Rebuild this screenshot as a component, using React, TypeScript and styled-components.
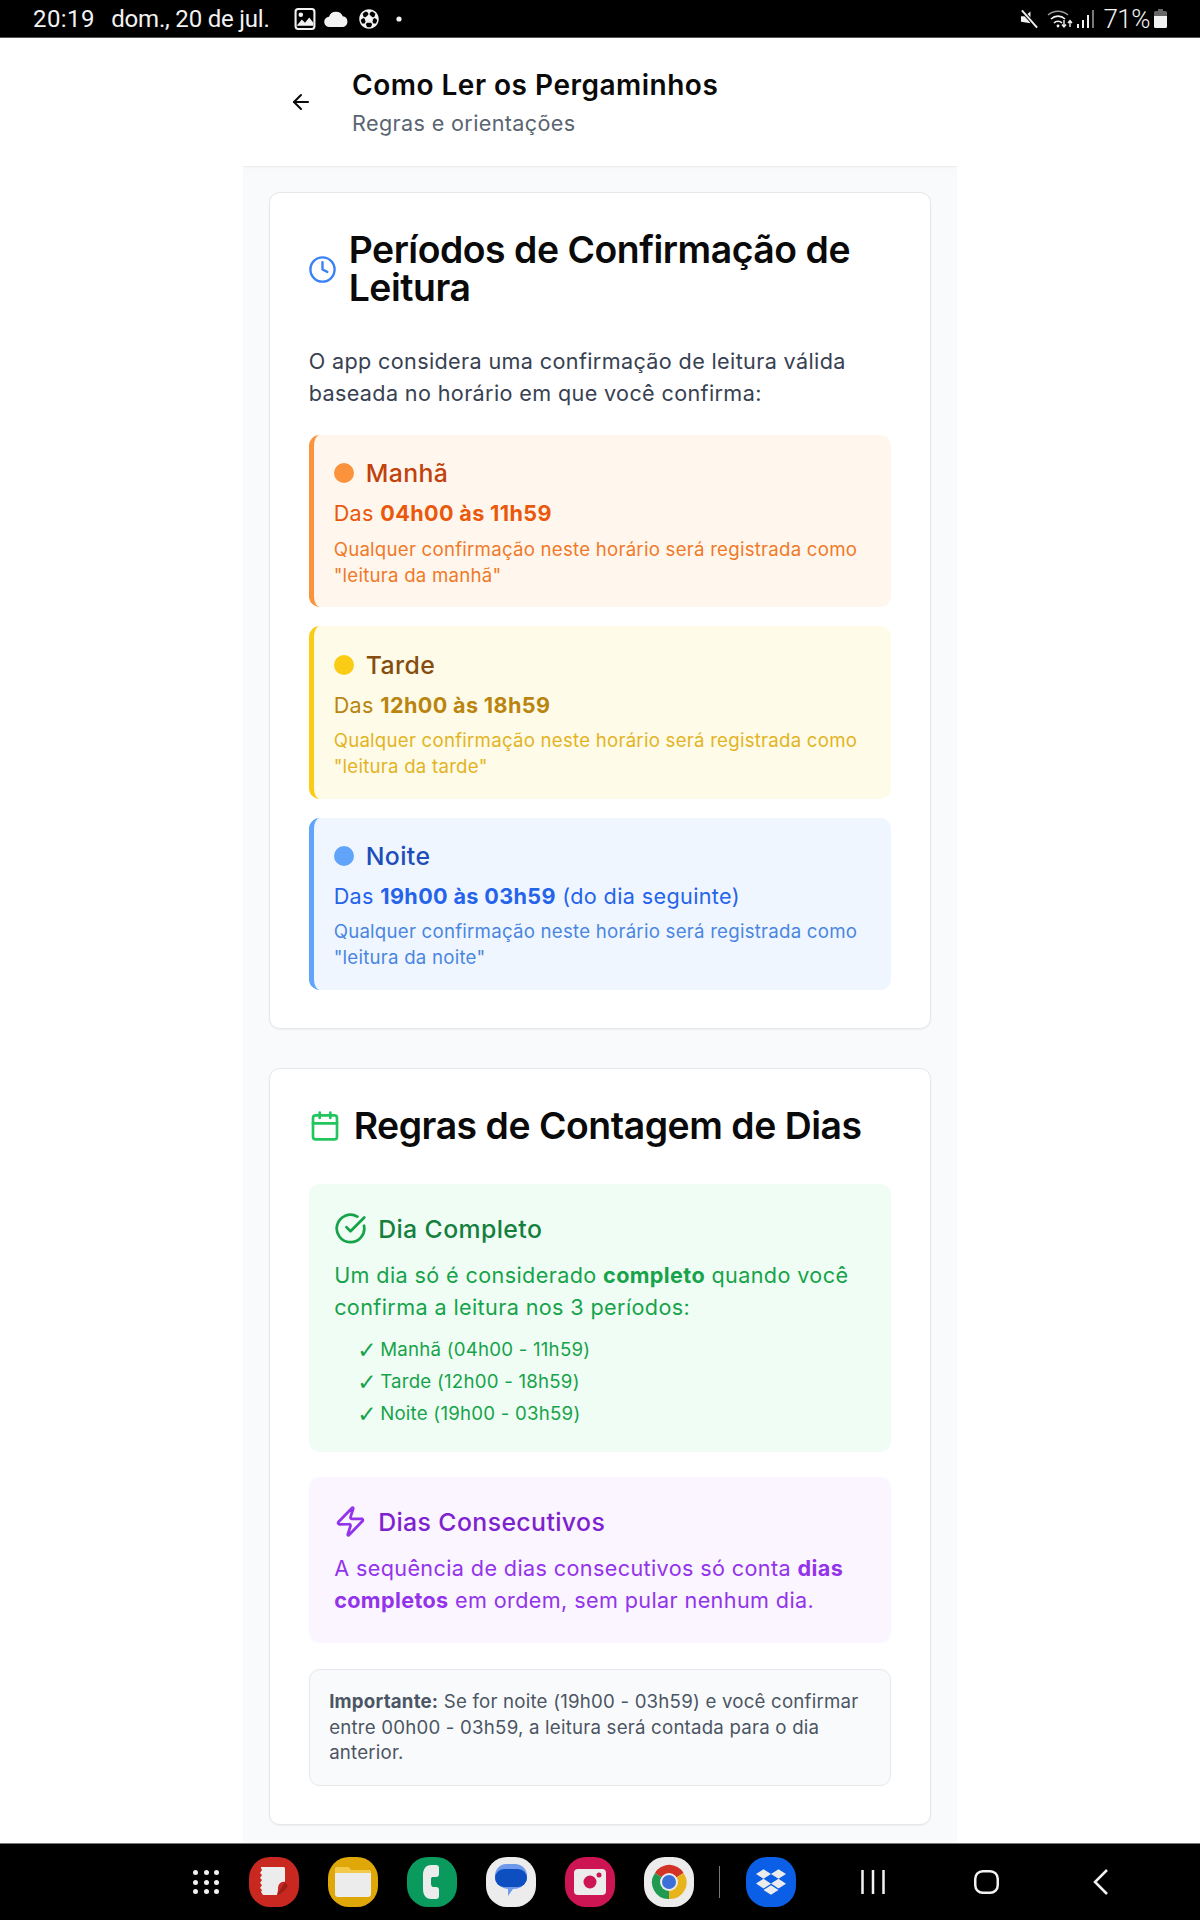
import React from "react";
import styled, { createGlobalStyle } from "styled-components";
import { ArrowLeft, Clock, Calendar, CircleCheckBig, Zap } from "lucide-react";
import { FaDropbox } from "react-icons/fa";
import { IoFootball } from "react-icons/io5";

const Global = createGlobalStyle`
  html, body { margin: 0; padding: 0; background: #fff; }
  * { box-sizing: border-box; }
  #root { font-family: Inter, "Liberation Sans", sans-serif; font-optical-sizing: none; }
`;

const Screen = styled.div`
  width: 1200px;
  height: 1920px;
  display: flex;
  flex-direction: column;
  overflow: hidden;
  background: #fff;
`;

const StatusBar = styled.div`
  flex: 0 0 38px;
  background: #000;
  border-bottom: 1px solid #555;
  color: #f2f2f2;
  display: flex;
  align-items: center;
  justify-content: space-between;
  padding: 0 33px;
  font-family: Roboto, sans-serif;
  font-size: 24px;
`;

const StatusGroup = styled.div`
  display: flex;
  align-items: center;
`;

const Time = styled.span`
  margin-right: 16.5px;
  letter-spacing: 0.4px;
`;

const DateText = styled.span`
  margin-right: 24px;
  letter-spacing: -0.2px;
`;

const Percent = styled.span`
  font-weight: 300;
  font-size: 26px;
  letter-spacing: -0.5px;
  margin: 0 4px 0 9px;
`;

const StatusIcon = styled.svg<{ $mr?: number; $ml?: number }>`
  display: block;
  margin-right: ${(p) => p.$mr ?? 0}px;
  margin-left: ${(p) => p.$ml ?? 0}px;
`;

const Column = styled.div`
  flex: 1;
  min-height: 0;
  width: 714px;
  margin-left: 243px;
  background: #f9fafb;
  display: flex;
  flex-direction: column;
  overflow: hidden;
`;

const Header = styled.header`
  flex: 0 0 129px;
  background: #fff;
  border-bottom: 1px solid #eceef1;
  box-shadow: 0 1px 2px rgba(0, 0, 0, 0.03);
  display: flex;
  align-items: center;
  padding: 0 0 0 46px;
  gap: 39px;
  color: #0a0a0a;
`;

const HeaderText = styled.div`
  display: flex;
  flex-direction: column;
  gap: 3px;
  padding-top: 1px;
`;

const PageTitle = styled.h1`
  margin: 0;
  font-size: 28px;
  line-height: 38px;
  font-weight: 600;
  letter-spacing: 0.5px;
`;

const PageSub = styled.div`
  font-size: 21.6px;
  line-height: 32px;
  letter-spacing: 0.36px;
  color: #5b6472;
`;

const Content = styled.main`
  padding: 25px 26px 0;
  display: flex;
  flex-direction: column;
  gap: 39px;
`;

const Card = styled.section`
  background: #fff;
  border: 1.33px solid #e5e7eb;
  border-radius: 10.67px;
  box-shadow: 0 1px 2px rgba(0, 0, 0, 0.05);
  padding: 38px 38.67px 37.67px;
`;

const CardHead = styled.div<{ $gap: number; $mb: number }>`
  display: flex;
  align-items: center;
  gap: ${(p) => p.$gap}px;
  margin-bottom: ${(p) => p.$mb}px;
  svg { flex-shrink: 0; }
`;

const ClockIcon = styled(Clock)`
  margin-left: -1px;
`;

const CardTitle = styled.h2`
  margin: 0;
  font-size: 37.33px;
  line-height: 38px;
  font-weight: 600;
  letter-spacing: -0.45px;
  color: #0a0a0a;
`;

const Intro = styled.p`
  margin: 0 0 26px;
  font-size: 21.6px;
  line-height: 32px;
  letter-spacing: 0.36px;
  color: #374151;
`;

const PeriodList = styled.div`
  display: flex;
  flex-direction: column;
  gap: 19px;
`;

const Period = styled.div<{ $bg: string; $edge: string }>`
  background: ${(p) => p.$bg};
  border-left: 5.33px solid ${(p) => p.$edge};
  border-radius: 10.67px;
  padding: 22.3px 21.33px 19.1px 20px;
`;

const PeriodHead = styled.div`
  display: flex;
  align-items: center;
  gap: 12px;
  margin-bottom: 8px;
`;

const Dot = styled.span<{ $c: string }>`
  width: 20px;
  height: 20px;
  border-radius: 50%;
  background: ${(p) => p.$c};
`;

const PeriodName = styled.div<{ $c: string }>`
  font-size: 24.8px;
  line-height: 32px;
  font-weight: 500;
  letter-spacing: 0.4px;
  color: ${(p) => p.$c};
`;

const PeriodTime = styled.div<{ $c: string }>`
  font-size: 21.6px;
  line-height: 32px;
  letter-spacing: 0.36px;
  color: ${(p) => p.$c};
  margin-bottom: 7.53px;
  b { font-weight: 700; }
`;

const PeriodNote = styled.div<{ $c: string }>`
  font-size: 18.67px;
  line-height: 25.7px;
  letter-spacing: 0.23px;
  color: ${(p) => p.$c};
`;

const RuleList = styled.div`
  display: flex;
  flex-direction: column;
  gap: 25.7px;
`;

const Rule = styled.div<{ $bg: string; $pb: number }>`
  background: ${(p) => p.$bg};
  border-radius: 10.67px;
  padding: 28px 26.67px ${(p) => p.$pb}px 25.5px;
`;

const RuleHead = styled.div<{ $c: string }>`
  display: flex;
  align-items: center;
  gap: 11px;
  margin-bottom: 14px;
  color: ${(p) => p.$c};
  font-size: 24.8px;
  line-height: 32px;
  font-weight: 500;
  letter-spacing: 0.4px;
`;

const RuleText = styled.p<{ $c: string }>`
  margin: 0;
  font-size: 21.6px;
  line-height: 32px;
  letter-spacing: 0.38px;
  color: ${(p) => p.$c};
  b { font-weight: 700; }
`;

const Checks = styled.ul`
  list-style: none;
  margin: 10.5px 0 0;
  padding: 0 0 0 23px;
`;

const CheckItem = styled.li`
  font-size: 18.67px;
  line-height: 32px;
  letter-spacing: 0.23px;
  color: #16a34a;
`;

const CheckMark = styled.span`
  display: inline-block;
  width: 23px;
  font-family: "DejaVu Sans", sans-serif;
  font-size: 23px;
  font-weight: 700;
  line-height: 1;
  letter-spacing: 0;
  vertical-align: -2px;
`;

const Notice = styled.div`
  background: #f9fafb;
  border: 1.33px solid #e5e7eb;
  border-radius: 10.67px;
  padding: 19px 19.5px;
  font-size: 18.67px;
  line-height: 25.7px;
  letter-spacing: 0.21px;
  color: #4b5563;
  b { font-weight: 700; }
`;

const NavBar = styled.nav`
  flex: 0 0 77px;
  background: #000;
  border-top: 1px solid #777;
  display: flex;
  align-items: center;
  padding: 0 0 0 193px;
`;

const AppGrid = styled.div`
  width: 26px;
  height: 24px;
  margin-right: 30px;
  display: grid;
  grid-template-columns: repeat(3, 5px);
  grid-template-rows: repeat(3, 5px);
  justify-content: space-between;
  align-content: space-between;
`;

const GridDot = styled.span`
  background: #f2f2f2;
  border-radius: 50%;
`;

const AppIcon = styled.div<{ $bg: string; $mr?: number }>`
  width: 50px;
  height: 50px;
  flex: 0 0 50px;
  border-radius: 42%;
  background: ${(p) => p.$bg};
  margin-right: ${(p) => p.$mr ?? 29}px;
  display: flex;
  align-items: center;
  justify-content: center;
  overflow: hidden;
`;

const Divider = styled.span`
  width: 1px;
  height: 32px;
  background: #777;
  margin-right: 26px;
`;

const NavButton = styled.svg<{ $mr: number }>`
  display: block;
  flex-shrink: 0;
  margin-right: ${(p) => p.$mr}px;
`;

const periods = [
  { name: "Manhã", range: "04h00 às 11h59", extra: "", quote: "leitura da manhã", bg: "#fff7ed", edge: "#fb923c", title: "#c2410c", time: "#ea580c", note: "#f0792a" },
  { name: "Tarde", range: "12h00 às 18h59", extra: "", quote: "leitura da tarde", bg: "#fefce8", edge: "#facc15", title: "#854d0e", time: "#b98510", note: "#e3b325" },
  { name: "Noite", range: "19h00 às 03h59", extra: " (do dia seguinte)", quote: "leitura da noite", bg: "#eff6ff", edge: "#60a5fa", title: "#1e4db8", time: "#2563eb", note: "#4a86e0" },
];

export default function App() {
  return (
    <Screen>
      <Global />
      <StatusBar>
        <StatusGroup>
          <Time>20:19</Time>
          <DateText>dom., 20 de jul.</DateText>
          <StatusIcon $mr={8} width="22" height="22" viewBox="0 0 20 21">
            <rect x="1" y="1" width="18" height="19" rx="2.5" fill="none" stroke="#f2f2f2" strokeWidth="2" />
            <circle cx="6" cy="6.5" r="2.2" fill="#f2f2f2" />
            <path d="M2 17l5-6 3 3 4-5 4 5v3H2z" fill="#f2f2f2" />
          </StatusIcon>
          <StatusIcon $mr={8} width="25" height="16" viewBox="0 0 22 14">
            <path d="M5 14a4.5 4.5 0 0 1-.6-9A6.5 6.5 0 0 1 16.5 4.6 4.8 4.8 0 0 1 17 14z" fill="#f2f2f2" />
          </StatusIcon>
          <IoFootball size={24} color="#f2f2f2" />
          <StatusIcon $ml={15} width="6" height="6" viewBox="0 0 6 6">
            <circle cx="3" cy="3" r="2.6" fill="#f2f2f2" />
          </StatusIcon>
        </StatusGroup>
        <StatusGroup>
          <StatusIcon $mr={8} width="19" height="20" viewBox="0 0 20 20">
            <path d="M1 7h4l6-5v12.5L1 13z" fill="#f2f2f2" />
            <path d="M2 1l16 18" stroke="#000" strokeWidth="4" />
            <path d="M2 1l16 18" stroke="#f2f2f2" strokeWidth="2" />
          </StatusIcon>
          <StatusIcon $mr={4} width="26" height="20" viewBox="0 0 26 20">
            <g fill="none" stroke="#f2f2f2" strokeWidth="1.6">
              <path d="M1 6a15 15 0 0 1 20 0" stroke="#999" />
              <path d="M4 10a10 10 0 0 1 14 0" />
              <path d="M7 14a5.5 5.5 0 0 1 8 0" />
            </g>
            <circle cx="11" cy="17" r="1.4" fill="#f2f2f2" />
            <path d="M17 11v7M15 15.5l2 2.5 2-2.5M23 18v-6M21 14l2-2.5 2 2.5" fill="none" stroke="#f2f2f2" strokeWidth="1.4" />
          </StatusIcon>
          <StatusIcon width="17" height="18" viewBox="0 0 17 18">
            <rect x="0" y="14" width="2" height="4" fill="#f2f2f2" />
            <rect x="5" y="10" width="2" height="8" fill="#f2f2f2" />
            <rect x="10" y="5" width="2" height="13" fill="#f2f2f2" />
            <rect x="15" y="0" width="2" height="18" fill="#777" />
          </StatusIcon>
          <Percent>71%</Percent>
          <StatusIcon width="13" height="19" viewBox="0 0 13 19">
            <path d="M4 0h5v2h2.5A1.5 1.5 0 0 1 13 3.5V7H0V3.5A1.5 1.5 0 0 1 1.5 2H4z" fill="#666" />
            <path d="M0 7h13v10.5a1.5 1.5 0 0 1-1.5 1.5h-10A1.5 1.5 0 0 1 0 17.5z" fill="#f2f2f2" />
          </StatusIcon>
        </StatusGroup>
      </StatusBar>

      <Column>
        <Header>
          <ArrowLeft size={24} strokeWidth={2} />
          <HeaderText>
            <PageTitle>Como Ler os Pergaminhos</PageTitle>
            <PageSub>Regras e orientações</PageSub>
          </HeaderText>
        </Header>

        <Content>
          <Card>
            <CardHead $gap={12} $mb={38}>
              <ClockIcon size={29} color="#3b82f6" strokeWidth={2} />
              <CardTitle>Períodos de Confirmação de Leitura</CardTitle>
            </CardHead>
            <Intro>O app considera uma confirmação de leitura válida baseada no horário em que você confirma:</Intro>
            <PeriodList>
              {periods.map((p) => (
                <Period key={p.name} $bg={p.bg} $edge={p.edge}>
                  <PeriodHead>
                    <Dot $c={p.edge} />
                    <PeriodName $c={p.title}>{p.name}</PeriodName>
                  </PeriodHead>
                  <PeriodTime $c={p.time}>
                    Das <b>{p.range}</b>
                    {p.extra}
                  </PeriodTime>
                  <PeriodNote $c={p.note}>
                    Qualquer confirmação neste horário será registrada como "{p.quote}"
                  </PeriodNote>
                </Period>
              ))}
            </PeriodList>
          </Card>

          <Card>
            <CardHead $gap={13} $mb={39.5}>
              <Calendar size={32} color="#22c55e" strokeWidth={2} />
              <CardTitle>Regras de Contagem de Dias</CardTitle>
            </CardHead>
            <RuleList>
              <Rule $bg="#f0fdf4" $pb={22}>
                <RuleHead $c="#15803d">
                  <CircleCheckBig size={33} strokeWidth={2} color="#16a34a" />
                  Dia Completo
                </RuleHead>
                <RuleText $c="#16a34a">
                  Um dia só é considerado <b>completo</b> quando você confirma a leitura nos 3 períodos:
                </RuleText>
                <Checks>
                  <CheckItem><CheckMark>✓</CheckMark>Manhã (04h00 - 11h59)</CheckItem>
                  <CheckItem><CheckMark>✓</CheckMark>Tarde (12h00 - 18h59)</CheckItem>
                  <CheckItem><CheckMark>✓</CheckMark>Noite (19h00 - 03h59)</CheckItem>
                </Checks>
              </Rule>
              <Rule $bg="#faf5ff" $pb={27}>
                <RuleHead $c="#7e22ce">
                  <Zap size={33} strokeWidth={2} color="#9333ea" />
                  Dias Consecutivos
                </RuleHead>
                <RuleText $c="#9333ea">
                  A sequência de dias consecutivos só conta <b>dias completos</b> em ordem, sem pular nenhum dia.
                </RuleText>
              </Rule>
              <Notice>
                <b>Importante:</b> Se for noite (19h00 - 03h59) e você confirmar entre 00h00 - 03h59, a leitura será contada para o dia anterior.
              </Notice>
            </RuleList>
          </Card>
        </Content>
      </Column>

      <NavBar>
        <AppGrid>
          {Array.from({ length: 9 }, (_, i) => (
            <GridDot key={i} />
          ))}
        </AppGrid>
        <AppIcon $bg="#c8281f">
          <svg width="32" height="32" viewBox="0 0 32 32">
            <path d="M3 1h23a2 2 0 0 1 1 2v13c-4-1-7 2-7 7v1l-1 5H5l-2-3 1-2-2-2 2-3-2-2 2-3-2-2 2-3-2-2 2-3-1-2z" fill="#ececec" />
            <path d="M27 16l-8 13c6-2 8-5 11-9z" fill="#9c1f18" />
          </svg>
        </AppIcon>
        <AppIcon $bg="#dfa708">
          <svg width="36" height="30" viewBox="0 0 36 30">
            <path d="M0 3a3 3 0 0 1 3-3h10l3 3h17a3 3 0 0 1 3 3v21a3 3 0 0 1-3 3H3a3 3 0 0 1-3-3z" fill="#ececec" />
            <path d="M0 3a3 3 0 0 1 3-3h10l3 3h17a3 3 0 0 1 3 3H0z" fill="#f3c94a" />
          </svg>
        </AppIcon>
        <AppIcon $bg="#0b9a5e">
          <svg width="20" height="34" viewBox="0 0 20 34">
            <path d="M9 0h5a3 3 0 0 1 3 3v6a3 3 0 0 1-3 3h-3c-1 0-2 .5-2 2v5c0 1.5 1 3 2 3h3a3 3 0 0 1 3 3v6a3 3 0 0 1-3 3H9C4 34 1 30 1 24V10C1 4 4 0 9 0z" fill="#ececec" />
          </svg>
        </AppIcon>
        <AppIcon $bg="#ececec">
          <svg width="34" height="36" viewBox="0 0 34 36">
            <path d="M12 0h10a12 12 0 0 1 11 12 13 13 0 0 1-13 13h-1l-5 7v-7C6 24 1 19 1 12 1 5 6 0 12 0z" fill="#6f9aec" />
            <rect x="1" y="5" width="32" height="18" rx="9" fill="#0d4ec0" />
          </svg>
        </AppIcon>
        <AppIcon $bg="#cc1552">
          <svg width="32" height="26" viewBox="0 0 32 26">
            <rect x="0" y="0" width="32" height="26" rx="4" fill="#ececec" />
            <circle cx="16" cy="13" r="6.5" fill="#cc1552" />
            <circle cx="25" cy="6" r="2.5" fill="#cc1552" />
          </svg>
        </AppIcon>
        <AppIcon $bg="#ececec" $mr={25}>
          <svg width="38" height="38" viewBox="0 0 38 38">
            <path d="M19 19L5 10A16.5 16.5 0 0 1 33.5 10z" fill="#d23327" />
            <path d="M19 19l14.5-9A16.5 16.5 0 0 1 19 36z" fill="#e7b41c" />
            <path d="M19 19v17A16.5 16.5 0 0 1 5 10z" fill="#1f9a50" />
            <circle cx="19" cy="19" r="9" fill="#ececec" />
            <circle cx="19" cy="19" r="7" fill="#3d6fd9" />
          </svg>
        </AppIcon>
        <Divider />
        <AppIcon $bg="#0b5fe6" $mr={65}>
          <FaDropbox size={30} color="#ececec" />
        </AppIcon>
        <NavButton $mr={89} width="24" height="24" viewBox="0 0 24 24">
          <path d="M1.5 0v24M12 0v24M22.5 0v24" stroke="#f2f2f2" strokeWidth="2.5" />
        </NavButton>
        <NavButton $mr={94} width="25" height="24" viewBox="0 0 25 24">
          <rect x="1.25" y="1.25" width="22.5" height="21.5" rx="7.5" fill="none" stroke="#f2f2f2" strokeWidth="2.5" />
        </NavButton>
        <NavButton $mr={0} width="15" height="26" viewBox="0 0 15 26">
          <path d="M14 1L2 13l12 12" fill="none" stroke="#f2f2f2" strokeWidth="2.5" />
        </NavButton>
      </NavBar>
    </Screen>
  );
}
